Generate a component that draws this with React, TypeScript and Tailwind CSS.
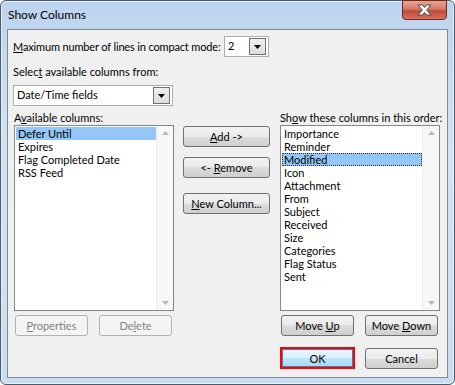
import React from 'react'

const font = { fontFamily: '"Segoe UI", Lato, sans-serif' }

const U = ({ children }: { children: React.ReactNode }) => <span className="underline underline-offset-[1px]">{children}</span>

const Btn = ({ children, className = '', disabled = false }: { children: React.ReactNode; className?: string; disabled?: boolean }) => (
  <div
    className={
      'flex h-[21px] items-center justify-center rounded-[3px] border text-[11px] ' +
      (disabled
        ? 'border-[#adb2b5] bg-[#f4f4f4] text-[#838383] '
        : 'border-[#707070] bg-[linear-gradient(#f2f2f2_0%,#ebebeb_50%,#dddddd_50%,#cfcfcf_100%)] text-black ') +
      className
    }
  >
    <span className="leading-none">{children}</span>
  </div>
)

const DropBtn = () => (
  <div className="flex h-[17px] w-[17px] items-center justify-center border border-[#707070] bg-[linear-gradient(#f0f0f0,#dcdcdc)]">
    <svg width="7" height="4" viewBox="0 0 7 4">
      <path d="M0 0h7L3.5 4z" fill="#000" />
    </svg>
  </div>
)

const ScrollBar = () => (
  <div className="flex w-[17px] flex-col items-center justify-between border-l border-[#ececec] bg-[#f7f7f7] py-[5px]">
    <svg width="7" height="4" viewBox="0 0 7 4">
      <path d="M0 4h7L3.5 0z" fill="#b8b8b8" />
    </svg>
    <svg width="7" height="4" viewBox="0 0 7 4">
      <path d="M0 0h7L3.5 4z" fill="#b8b8b8" />
    </svg>
  </div>
)

const ListBox = ({ items, selected, focus }: { items: string[]; selected: string; focus?: boolean }) => (
  <div className="flex h-[186px] w-[160px] border border-[#828790] bg-white">
    <div className="flex-1 pt-px pl-px">
      {items.map((it) => (
        <div
          key={it}
          className={
            'h-[13px] overflow-hidden pl-[2px] text-[11px] leading-[13px] whitespace-nowrap ' +
            (it === selected ? 'bg-[#94c7f8] ' : '') +
            (it === selected && focus ? 'outline-1 outline-dotted outline-offset-[-1px] outline-[#333]' : '')
          }
        >
          {it}
        </div>
      ))}
    </div>
    <ScrollBar />
  </div>
)

export default function App() {
  return (
    <div style={font} className="h-[385px] w-[455px] bg-white text-black">
      <div className="relative flex h-[385px] w-[455px] flex-col rounded-[6px] border border-[#4b5a6b] bg-[linear-gradient(#bcd4ee,#d2e3f5_40%,#c9ddf2)] shadow-[inset_0_0_0_1px_rgba(255,255,255,0.6)]">
        <div className="flex h-[28px] items-center pl-[7px] text-[12px] text-black">Show Columns</div>
        <div className="absolute top-[-1px] right-[7px] flex h-[20px] w-[45px] items-center justify-center rounded-b-[4px] border border-[#6b2a20] bg-[linear-gradient(#e8a493_0%,#d47a6a_45%,#c24a38_55%,#d8705e_100%)]">
          <svg width="15" height="12" viewBox="0 0 15 12">
            <path
              d="M1 1h4.5l2 2.5 2-2.5H14L9.7 6l4.3 5H9.5l-2-2.5-2 2.5H1l4.3-5z"
              fill="#fff"
              stroke="#4a4a4a"
              strokeWidth="1"
              strokeLinejoin="round"
            />
          </svg>
        </div>
        <div className="ml-[6px] h-[349px] w-[441px] border border-[#828a94] bg-[#f0f0f0]">
          <div className="mt-[6px] flex h-[21px] items-center pl-[5px]">
            <div className="w-[211px] text-[11px] leading-none tracking-[-0.15px] whitespace-nowrap">
              <U>M</U>aximum number of lines in compact mode:
            </div>
            <div className="flex h-[21px] w-[45px] items-center justify-between border border-[#abadb3] bg-white pr-[2px] pl-[3px] text-[11px]">
              <span>2</span>
              <DropBtn />
            </div>
          </div>
          <div className="mt-[7px] pl-[5px] text-[11px] leading-[15px]">
            Selec<U>t</U> available columns from:
          </div>
          <div className="mt-[6px] ml-[5px] flex h-[21px] w-[160px] items-center justify-between border border-[#abadb3] bg-white pr-[2px] pl-[3px] text-[11px]">
            <span>Date/Time fields</span>
            <DropBtn />
          </div>
          <div className="mt-[4px] flex">
            <div className="ml-[6px] w-[160px]">
              <div className="text-[11px] leading-[15px]">
                A<U>v</U>ailable columns:
              </div>
              <ListBox items={['Defer Until', 'Expires', 'Flag Completed Date', 'RSS Feed']} selected="Defer Until" />
              <div className="mt-[4px] ml-px flex gap-[11px]">
                <Btn disabled className="w-[73px]">
                  <U>P</U>roperties
                </Btn>
                <Btn disabled className="w-[73px]">
                  De<U>l</U>ete
                </Btn>
              </div>
            </div>
            <div className="ml-[9px] flex w-[87px] flex-col pt-[16px]">
              <Btn>
                <U>A</U>dd -&gt;
              </Btn>
              <Btn className="mt-[10px]">
                &lt;- <U>R</U>emove
              </Btn>
              <Btn className="mt-[15px]">
                <U>N</U>ew Column...
              </Btn>
            </div>
            <div className="ml-[10px] w-[160px]">
              <div className="text-[11px] leading-[15px] whitespace-nowrap">
                Sh<U>o</U>w these columns in this order:
              </div>
              <ListBox
                focus
                items={['Importance', 'Reminder', 'Modified', 'Icon', 'Attachment', 'From', 'Subject', 'Received', 'Size', 'Categories', 'Flag Status', 'Sent']}
                selected="Modified"
              />
              <div className="mt-[4px] ml-px flex gap-[11px]">
                <Btn className="w-[73px]">
                  Move <U>U</U>p
                </Btn>
                <Btn className="w-[73px]">
                  Move <U>D</U>own
                </Btn>
              </div>
              <div className="mt-[11px] flex items-center gap-[10px]">
                <div className="h-[22px] w-[75px] border-2 border-[#ff0000] p-0">
                  <div className="flex h-full items-center justify-center border border-[#3c7fb1] bg-[linear-gradient(#eaf6fd_0%,#d9f0fc_50%,#bee6fd_50%,#a7d9f5_100%)] text-[11px] leading-none">
                    OK
                  </div>
                </div>
                <Btn className="h-[20px] w-[73px]">Cancel</Btn>
              </div>
            </div>
          </div>
        </div>
      </div>
    </div>
  )
}
